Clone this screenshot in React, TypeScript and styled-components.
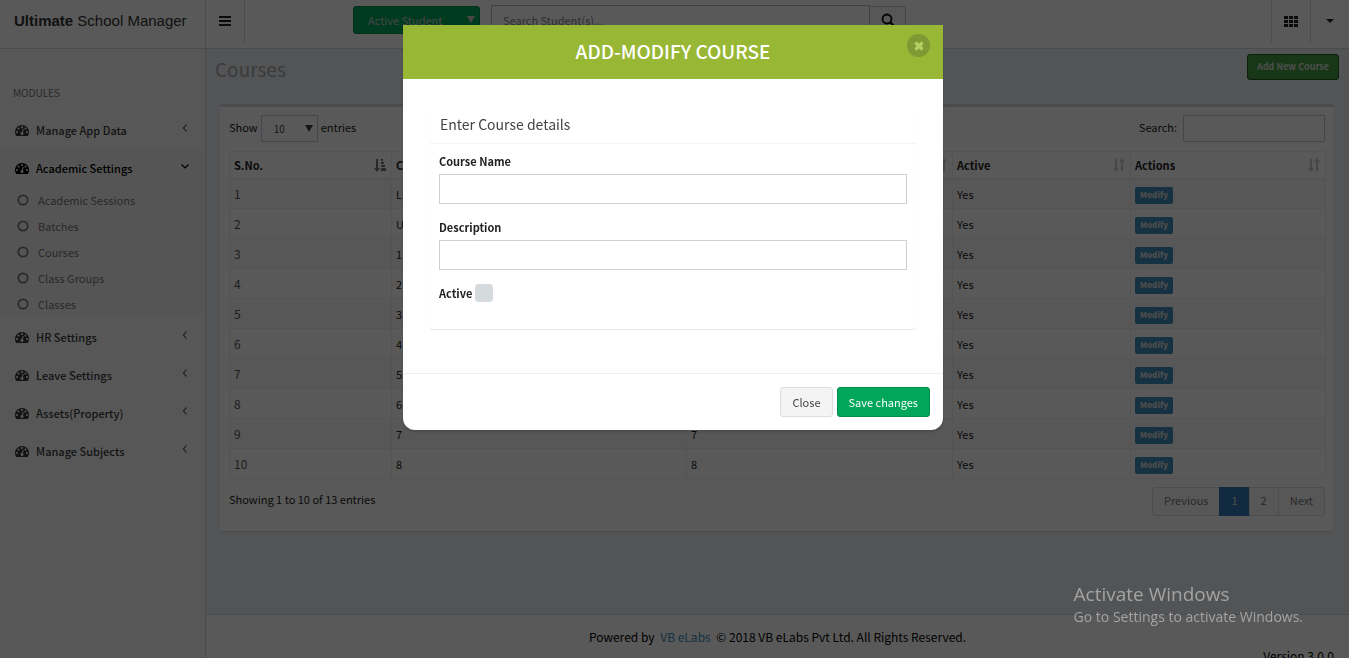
import React from "react";
import styled, { createGlobalStyle } from "styled-components";

const GlobalStyle = createGlobalStyle`
  *, *::before, *::after { box-sizing: border-box; }
  body {
    margin: 0;
    height: 100vh;
    overflow: hidden;
    background: #f9fafc;
    color: #222;
    font-family: "Noto Sans CJK SC", "Noto Sans", sans-serif;
    font-size: 11px;
    line-height: 18px;
  }
  button, input, select { font: inherit; color: inherit; }
  a { text-decoration: none; color: inherit; }
  ul { list-style: none; margin: 0; padding: 0; }
  h1, h2, h3 { margin: 0; font-weight: 400; }
`;

/* ---------- page frame ---------- */

const Page = styled.div`
  display: flex;
  flex-direction: column;
  min-height: 100vh;
`;

const Header = styled.header`
  display: flex;
  height: 49px;
  background: #fff;
  border-bottom: 1px solid #d2d6de;
`;

const Brand = styled.a`
  flex: none;
  width: 206px;
  padding: 11px 0 0 14px;
  border-right: 1px solid #d2d6de;
  font-family: "Liberation Sans", Arial, sans-serif;
  font-size: 15px;
  line-height: 20px;
  color: #333;
  white-space: nowrap;
`;

const IconButton = styled.button<{ $side: "left" | "right" }>`
  display: flex;
  align-items: center;
  justify-content: center;
  width: 39px;
  height: 42px;
  padding: 0;
  border: 0 solid #d2d6de;
  border-left-width: ${(p) => (p.$side === "left" ? 1 : 0)}px;
  border-right-width: ${(p) => (p.$side === "right" ? 1 : 0)}px;
  background: none;
  color: #222;
`;

const HeaderTools = styled.div`
  display: flex;
  flex: 1;
  gap: 11px;
  padding: 5px 0 0 108px;
`;

const SelectWrap = styled.div`
  position: relative;
  display: flex;
`;

const SelectArrow = styled.span`
  position: absolute;
  top: 50%;
  right: 5px;
  margin-top: -4px;
  border: 4px solid transparent;
  border-top: 7px solid currentColor;
  border-bottom: 0;
  pointer-events: none;
`;

const StudentFilter = styled(SelectWrap)`
  color: #ccc;
  margin-top: 1px;
  height: 28px;

  select {
    width: 127px;
    padding: 0 14px;
    appearance: none;
    border: 1px solid #008d4c;
    border-radius: 3px;
    background: #00a65a;
  }
`;

const SearchGroup = styled.form`
  display: flex;
  width: 415px;

  input {
    flex: 1;
    height: 30px;
    padding: 0 11px;
    border: 1px solid #bbb;
    background: #fff;
  }
  input::placeholder { color: #888; }
  button {
    width: 36px;
    height: 28px;
    margin-top: 1px;
    padding: 0;
    border: 1px solid #ccc;
    border-left: 0;
    border-radius: 0 3px 3px 0;
    background: #f8f8f8;
    color: #000;
  }
  svg { display: block; margin: 0 auto; }
`;

const Columns = styled.div`
  display: flex;
  flex: 1;
`;

/* ---------- sidebar ---------- */

const Sidebar = styled.nav`
  flex: none;
  width: 206px;
  padding-top: 35px;
  border-right: 1px solid #d2d6de;
  background: #f9fafc;
`;

const SidebarTitle = styled.div`
  height: 27px;
  padding-left: 13px;
  font-size: 10px;
  color: #777;
`;

const ModuleItem = styled.li<{ $open?: boolean }>`
  background: ${(p) => (p.$open ? "#f4f4f5" : "transparent")};
  color: ${(p) => (p.$open ? "#000" : "#3a3a3a")};
`;

const ModuleLink = styled.a`
  display: flex;
  align-items: center;
  gap: 7px;
  height: 38px;
  padding: 0 15px;
  font-weight: 500;

  span { flex: 1; }
`;

const SubMenu = styled.ul`
  padding-top: 1px;

  a {
    display: flex;
    align-items: center;
    gap: 9px;
    height: 26px;
    padding: 0 0 2px 17px;
    color: #777;
  }
`;

/* ---------- content ---------- */

const Main = styled.main`
  display: flex;
  flex: 1;
  flex-direction: column;
  min-width: 0;
  background: #ecf0f5;
`;

const TitleRow = styled.div`
  display: flex;
  justify-content: space-between;
  height: 55px;
  padding: 5px 10px 0 9px;

  h1 {
    padding-top: 3px;
    font-size: 19px;
    line-height: 24px;
    color: #aaa;
  }
`;

const AddButton = styled.button`
  height: 26px;
  padding: 0 9px;
  border: 1px solid #255625;
  border-radius: 3px;
  background: #449d44;
  color: #ddd;
  font-size: 9px;
  font-weight: 700;
`;

const Box = styled.section`
  margin: 0 15px 83px 14px;
  padding: 8px 9px 15px;
  border-top: 3px solid #d2d6de;
  border-radius: 3px;
  background: #fff;
  box-shadow: 0 1px 1px rgba(0, 0, 0, 0.1);
`;

const TableBar = styled.div`
  display: flex;
  align-items: flex-start;
  justify-content: space-between;
  line-height: 25px;

  label { display: flex; align-items: flex-start; gap: 3px; }
  label input {
    width: 142px;
    height: 27px;
    margin-left: 3px;
    border: 1px solid #c4c9d1;
    background: #fff;
  }
`;

const LengthSelect = styled(SelectWrap)`
  color: #444;

  select {
    width: 57px;
    height: 27px;
    padding: 0 12px;
    appearance: none;
    border: 1px solid #c4c9d1;
    border-radius: 0;
    background: #fff;
    font-size: 10px;
  }
`;

const Table = styled.table`
  width: 100%;
  margin: 9px 0 8px;
  border-collapse: collapse;
  table-layout: fixed;

  th, td {
    padding: 0 4px;
    border: 1px solid #f0f0f0;
    text-align: left;
  }
  th { height: 27px; border-bottom-width: 2px; font-weight: 700; }
  td { height: 30px; }
  td:first-child { font-size: 12px; color: #555; }
  tbody tr:nth-child(odd) { background: #f9f9f9; }
`;

const HeadCell = styled.div`
  display: flex;
  align-items: center;
  justify-content: space-between;
`;

const ModifyButton = styled.button`
  display: block;
  height: 17px;
  margin-top: 3px;
  padding: 0 5px;
  border: 0;
  border-radius: 2px;
  background: #3c8dbc;
  color: #ddd;
  font-size: 8px;
  font-weight: 900;
  line-height: 16px;
`;

const Pagination = styled.div`
  display: flex;
`;

const PageButton = styled.button<{ $active?: boolean }>`
  height: 29px;
  padding: 0 11px 2px;
  margin-left: -1px;
  border: 1px solid ${(p) => (p.$active ? "#337ab7" : "#ddd")};
  background: ${(p) => (p.$active ? "#337ab7" : "#fafafa")};
  color: ${(p) => (p.$active ? "#ddd" : "#777")};

  &:first-child { border-radius: 3px 0 0 3px; }
  &:last-child { border-radius: 0 3px 3px 0; }
`;

const Footer = styled.footer`
  padding: 12px 15px;
  border-top: 1px solid #d2d6de;
  background: #fff;
  color: #000;
  font-size: 12px;
  line-height: 19px;

  p { margin: 0; text-align: center; }
  p + p { text-align: right; }
  a { margin: 0 3px; color: #3c8dbc; }
`;

/* ---------- modal ---------- */

const Backdrop = styled.div`
  position: fixed;
  inset: 0;
  padding: 25px 3px 25px 0;
  background: rgba(0, 0, 0, 0.65);
`;

const Modal = styled.div`
  width: 540px;
  max-width: 100%;
  margin: 0 auto;
  border-radius: 0 0 12px 12px;
  background: #fff;
  box-shadow: 0 2px 3px rgba(0, 0, 0, 0.15);
`;

const ModalHeader = styled.header`
  position: relative;
  height: 54px;
  background: #98b835;
  color: #fff;
  text-align: center;

  h2 {
    font-size: 19px;
    font-weight: 500;
    line-height: 52px;
  }
`;

const ModalClose = styled.button`
  position: absolute;
  top: 9px;
  right: 13px;
  display: flex;
  align-items: center;
  justify-content: center;
  width: 23px;
  height: 23px;
  padding: 0;
  border: 0;
  border-radius: 50%;
  background: #7f9a35;
  color: #b4cf62;
`;

const ModalBody = styled.div`
  padding: 27px 27px 44px;
`;

const Panel = styled.section`
  border-radius: 3px;
  box-shadow: 0 1px 1px rgba(0, 0, 0, 0.1);

  h3 {
    height: 38px;
    padding-left: 10px;
    border-bottom: 1px solid #f4f4f4;
    font-size: 14px;
    line-height: 36px;
    color: #444;
  }
`;

const Fields = styled.form`
  padding: 8px 9px 27px;
`;

const Field = styled.div`
  margin-bottom: 14px;

  label { display: block; margin-bottom: 4px; font-weight: 700; }
  input {
    display: block;
    width: 100%;
    height: 30px;
    border: 1px solid #ccd0d4;
    background: #fff;
  }
`;

const CheckField = styled.label`
  display: flex;
  align-items: center;
  gap: 3px;
  font-weight: 700;

  input {
    appearance: none;
    width: 18px;
    height: 18px;
    margin: 0;
    border-radius: 4px;
    background: #d5dadd;
  }
`;

const ModalFooter = styled.footer`
  display: flex;
  justify-content: flex-end;
  gap: 4px;
  padding: 13px;
  border-top: 1px solid #f0f0f0;
`;

const ActionButton = styled.button<{ $primary?: boolean }>`
  height: 30px;
  padding: 0 11px;
  border: 1px solid ${(p) => (p.$primary ? "#008d4c" : "#ddd")};
  border-radius: 3px;
  background: ${(p) => (p.$primary ? "#00a65a" : "#f4f4f4")};
  color: ${(p) => (p.$primary ? "#fff" : "#444")};
`;

const Watermark = styled.aside`
  position: fixed;
  right: 46px;
  bottom: 31px;
  color: #a3a3a3;
  font-family: "Open Sans", sans-serif;
  font-size: 14px;
  line-height: 20px;
  pointer-events: none;

  strong {
    display: block;
    font-size: 19px;
    font-weight: 400;
    line-height: 26px;
  }
`;

/* ---------- icons ---------- */

const DashboardIcon = () => (
  <svg width="14" height="14" viewBox="0 0 1792 1792" fill="currentColor" aria-hidden="true">
    <path d="M384 1152q0-53-37.500-90.500t-90.500-37.500-90.500 37.500-37.500 90.500 37.500 90.500 90.500 37.500 90.500-37.500 37.500-90.500zm192-448q0-53-37.500-90.500t-90.500-37.500-90.500 37.500-37.500 90.500 37.500 90.500 90.500 37.500 90.500-37.500 37.500-90.500zm428 481l101-382q6-26-7.500-48.500t-38.500-29.500-48 6.500-30 39.500l-101 382q-60 5-107 43.500t-63 98.500q-20 77 20 146t117 89 146-20 89-117q16-60-6-117t-72-91zm660-33q0-53-37.500-90.500t-90.500-37.500-90.500 37.500-37.500 90.500 37.500 90.500 90.500 37.500 90.500-37.500 37.500-90.500zm-640-640q0-53-37.500-90.500t-90.500-37.500-90.500 37.500-37.500 90.500 37.500 90.500 90.500 37.500 90.500-37.500 37.500-90.500zm448 192q0-53-37.500-90.500t-90.500-37.500-90.500 37.500-37.500 90.500 37.500 90.500 90.500 37.500 90.500-37.500 37.500-90.500zm320 448q0 261-141 483-19 29-54 29h-1402q-35 0-54-29-141-221-141-483 0-182 71-348t191-286 286-191 348-71 348 71 286 191 191 286 71 348z" />
  </svg>
);

const CircleIcon = () => (
  <svg width="12" height="12" viewBox="0 0 12 12" fill="none" stroke="currentColor" strokeWidth="1.700" aria-hidden="true">
    <circle cx="6" cy="6" r="4.700" />
  </svg>
);

const Chevron = ({ open }: { open?: boolean }) => (
  <svg width="10" height="14" viewBox="0 0 10 14" fill="none" stroke="currentColor" strokeWidth="1.100" aria-hidden="true">
    <path d={open ? "M1.500 3.500 5 7 8.500 3.500" : "M6.500 1.500 3.500 5l3 3.500"} />
  </svg>
);

const BarsIcon = () => (
  <svg width="12" height="10" viewBox="0 0 12 10" fill="currentColor" aria-hidden="true">
    <path d="M0 0h12v2H0zM0 4h12v2H0zM0 8h12v2H0z" />
  </svg>
);

const GridIcon = () => (
  <svg width="14" height="11" viewBox="0 0 14 11" fill="currentColor" aria-hidden="true">
    <path d="M0 0h4v3H0zM5 0h4v3H5zM10 0h4v3h-4zM0 4h4v3H0zM5 4h4v3H5zM10 4h4v3h-4zM0 8h4v3H0zM5 8h4v3H5zM10 8h4v3h-4z" />
  </svg>
);

const CaretIcon = () => (
  <svg width="8" height="4" viewBox="0 0 8 4" fill="currentColor" aria-hidden="true">
    <path d="M0 0h8L4 4z" />
  </svg>
);

const SearchIcon = () => (
  <svg width="14" height="14" viewBox="0 0 14 14" fill="none" stroke="currentColor" strokeWidth="1.800" aria-hidden="true">
    <circle cx="6" cy="6" r="4.500" />
    <path d="m9 9 4 4" />
  </svg>
);

const CrossIcon = () => (
  <svg width="10" height="10" viewBox="0 0 10 10" stroke="currentColor" strokeWidth="3.200" aria-hidden="true">
    <path d="m1.500 1.500 7 7m0-7-7 7" />
  </svg>
);

const SortIcon = ({ sorted }: { sorted?: boolean }) => (
  <svg width="14" height="14" viewBox="0 0 14 14" fill={sorted ? "#777" : "#ccc"} aria-hidden="true">
    <path d="M3 1h2v9h2l-3 4-3-4h2z" />
    {sorted ? (
      <path d="M8 1h2v2H8zM8 4h3v2H8zM8 7h4v2H8zM8 10h5v3H8z" />
    ) : (
      <path d="M9 13h2V4h2l-3-4-3 4h2z" />
    )}
  </svg>
);

/* ---------- data ---------- */

const modules = [
  { name: "Manage App Data" },
  {
    name: "Academic Settings",
    pages: ["Academic Sessions", "Batches", "Courses", "Class Groups", "Classes"],
  },
  { name: "HR Settings" },
  { name: "Leave Settings" },
  { name: "Assets(Property)" },
  { name: "Manage Subjects" },
];

const courses = ["LKG", "UKG", "1", "2", "3", "4", "5", "6", "7", "8"];

/* Widths are shares: the fixed table layout stretches them to the full row. */
const columns = [
  { title: "S.No.", width: 162 },
  { title: "Course", width: 295 },
  { title: "Description", width: 266 },
  { title: "Active", width: 178 },
  { title: "Actions", width: 195 },
];

export default function App() {
  return (
    <>
      <GlobalStyle />
      <Page>
        <Header>
          <Brand href="#">
            <b>Ultimate</b> School Manager
          </Brand>
          <IconButton $side="right" aria-label="Toggle navigation">
            <BarsIcon />
          </IconButton>
          <HeaderTools>
            <StudentFilter>
              <select aria-label="Student status" defaultValue="Active Student">
                <option>Active Student</option>
              </select>
              <SelectArrow />
            </StudentFilter>
            <SearchGroup>
              <input aria-label="Search students" placeholder="Search Student(s)..." />
              <button type="button" aria-label="Search">
                <SearchIcon />
              </button>
            </SearchGroup>
          </HeaderTools>
          <IconButton $side="left" aria-label="Apps">
            <GridIcon />
          </IconButton>
          <IconButton $side="left" aria-label="Account menu">
            <CaretIcon />
          </IconButton>
        </Header>
        <Columns>
          <Sidebar>
            <SidebarTitle>MODULES</SidebarTitle>
            <ul>
              {modules.map((m) => (
                <ModuleItem key={m.name} $open={!!m.pages}>
                  <ModuleLink href="#">
                    <DashboardIcon />
                    <span>{m.name}</span>
                    <Chevron open={!!m.pages} />
                  </ModuleLink>
                  {m.pages && (
                    <SubMenu>
                      {m.pages.map((p) => (
                        <li key={p}>
                          <a href="#">
                            <CircleIcon />
                            {p}
                          </a>
                        </li>
                      ))}
                    </SubMenu>
                  )}
                </ModuleItem>
              ))}
            </ul>
          </Sidebar>
          <Main>
            <TitleRow>
              <h1>Courses</h1>
              <AddButton>Add New Course</AddButton>
            </TitleRow>
            <Box>
              <TableBar>
                <label>
                  Show
                  <LengthSelect>
                    <select defaultValue="10">
                      <option>10</option>
                    </select>
                    <SelectArrow />
                  </LengthSelect>
                  entries
                </label>
                <label>
                  Search:
                  <input type="search" />
                </label>
              </TableBar>
              <Table>
                <colgroup>
                  {columns.map((c) => (
                    <col key={c.title} width={c.width} />
                  ))}
                </colgroup>
                <thead>
                  <tr>
                    {columns.map((c, i) => (
                      <th key={c.title}>
                        <HeadCell>
                          {c.title}
                          <SortIcon sorted={i === 0} />
                        </HeadCell>
                      </th>
                    ))}
                  </tr>
                </thead>
                <tbody>
                  {courses.map((c, i) => (
                    <tr key={c}>
                      <td>{i + 1}</td>
                      <td>{c}</td>
                      <td>{c}</td>
                      <td>Yes</td>
                      <td>
                        <ModifyButton>Modify</ModifyButton>
                      </td>
                    </tr>
                  ))}
                </tbody>
              </Table>
              <TableBar>
                <span>Showing 1 to 10 of 13 entries</span>
                <Pagination>
                  <PageButton>Previous</PageButton>
                  <PageButton $active>1</PageButton>
                  <PageButton>2</PageButton>
                  <PageButton>Next</PageButton>
                </Pagination>
              </TableBar>
            </Box>
            <Footer>
              <p>
                Powered by <a href="#">VB eLabs</a> © 2018 VB eLabs Pvt Ltd. All Rights Reserved.
              </p>
              <p>Version 3.0.0</p>
            </Footer>
          </Main>
        </Columns>
      </Page>

      <Backdrop>
        <Modal role="dialog" aria-modal="true" aria-labelledby="modal-title">
          <ModalHeader>
            <h2 id="modal-title">ADD-MODIFY COURSE</h2>
            <ModalClose aria-label="Close dialog">
              <CrossIcon />
            </ModalClose>
          </ModalHeader>
          <ModalBody>
            <Panel>
              <h3>Enter Course details</h3>
              <Fields>
                <Field>
                  <label htmlFor="course-name">Course Name</label>
                  <input id="course-name" />
                </Field>
                <Field>
                  <label htmlFor="course-description">Description</label>
                  <input id="course-description" />
                </Field>
                <CheckField>
                  Active
                  <input type="checkbox" />
                </CheckField>
              </Fields>
            </Panel>
          </ModalBody>
          <ModalFooter>
            <ActionButton>Close</ActionButton>
            <ActionButton $primary>Save changes</ActionButton>
          </ModalFooter>
        </Modal>
      </Backdrop>

      <Watermark>
        <strong>Activate Windows</strong>
        Go to Settings to activate Windows.
      </Watermark>
    </>
  );
}
